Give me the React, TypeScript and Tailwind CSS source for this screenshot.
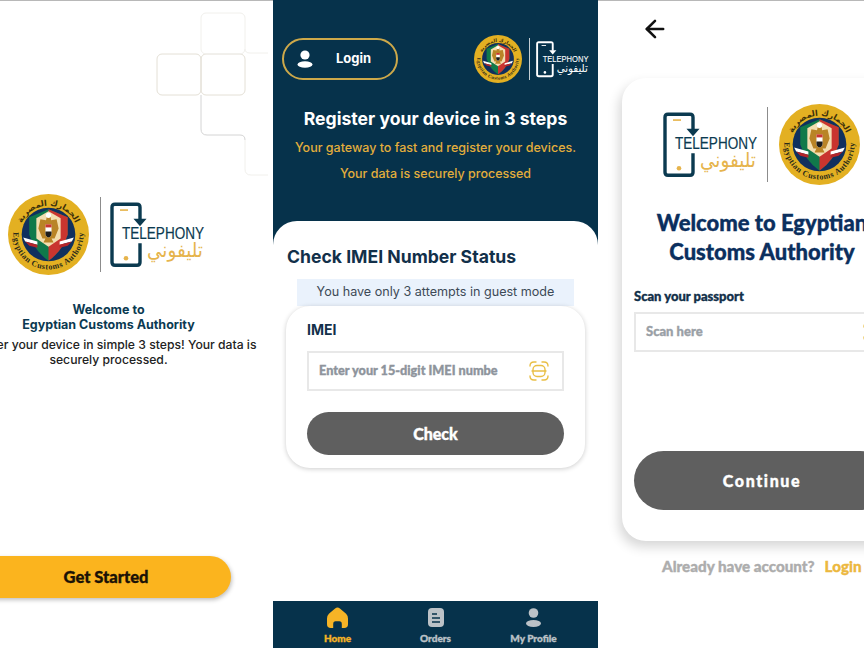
import React from "react";
import { ArrowLeft } from "lucide-react";

const sans = "[font-family:Inter,sans-serif]";
const round = "[font-family:Lato,sans-serif] [-webkit-text-stroke:0.35px_currentColor]";

function Seal({ size, id }: { size: number; id: string }) {
  return (
    <svg width={size} height={size} viewBox="0 0 80 80" className="shrink-0">
      <defs>
        <path id={`${id}-b`} d="M5.5 36 A34.7 34.7 0 1 0 74.5 36" fill="none" />
        <path id={`${id}-t`} d="M13 30 A29 29 0 0 1 67 30" fill="none" />
      </defs>
      <circle cx="40" cy="40" r="40" fill="#e3b022" />
      <circle cx="40" cy="40" r="26.5" fill="#10305e" />
      <path d="M21 23 L40 15 L59 23 L59 40 Q54 56 40 66 Q26 56 21 40 Z" fill="#10794a" />
      <path d="M40 15 L59 23 L59 40 Q54 56 40 66 Z" fill="#c9352f" />
      <path d="M28 24 L40 17 L52 24 L52 44 L40 52 L28 44 Z" fill="#f3deb0" />
      <path d="M39 20 L42 20 L42.5 26 L48 25 L50 34 L46 44 L43 44 L45 48 L35 48 L37 44 L34 44 L30 34 L32 25 L37.5 26 Z" fill="#b98427" />
      <path d="M37 30 L43 30 L43 39 Q43 42 40 43 Q37 42 37 39 Z" fill="#fff" />
      <path d="M37 30 L43 30 L43 33 L37 33 Z" fill="#c9352f" />
      <path d="M37 37 L43 37 L43 39 Q43 42 40 43 Q37 42 37 39 Z" fill="#1c1c1c" />
      <circle cx="40" cy="21" r="2.6" fill="#fff" />
      <path d="M15 43 L29 47 L29 50 L17 47 Z" fill="#fff" />
      <path d="M17 47 L29 50 L29 53 L21 51 Z" fill="#b3262b" />
      <path d="M65 43 L51 47 L51 50 L63 47 Z" fill="#fff" />
      <path d="M63 47 L51 50 L51 53 L59 51 Z" fill="#b3262b" />
      <text fontFamily="Liberation Serif, serif" fontWeight="700" fontSize="8" letterSpacing="0.55" fill="#2b2b1a">
        <textPath href={`#${id}-b`} startOffset="50%" textAnchor="middle">Egyptian Customs Authority</textPath>
      </text>
      <text fontFamily="DejaVu Sans, sans-serif" fontWeight="700" fontSize="8" fill="#3b2f0a">
        <textPath href={`#${id}-t`} startOffset="50%" textAnchor="middle">الجمارك المصرية</textPath>
      </text>
    </svg>
  );
}

function Telephony({ width, mono }: { width: number; mono?: boolean }) {
  const dark = mono ? "#ffffff" : "#0b3a50";
  const gold = mono ? "#ffffff" : "#e6b44c";
  return (
    <svg width={width} height={width * 0.69} viewBox="0 0 95 65" overflow="visible" className="shrink-0">
      <path d="M30 17 L30 5 Q30 2 27 2 L5 2 Q2 2 2 5 L2 60 Q2 63 5 63 L27 63 Q30 63 30 60 L30 41" fill="none" stroke={dark} strokeWidth="3.4" />
      <path d="M23.5 16.5 L36.5 16.5 L30 24 Z" fill={dark} />
      <rect x="10" y="7" width="8" height="1.6" fill={gold} />
      <circle cx="16" cy="56" r="2.3" fill={gold} />
      <text x="12" y="37" fontFamily="Liberation Sans, sans-serif" fontSize="17" stroke={dark} strokeWidth="0.2" fill={dark} textLength="82" lengthAdjust="spacingAndGlyphs">TELEPHONY</text>
      <text x="93" y="55" textAnchor="end" fontFamily="DejaVu Sans, sans-serif" fontSize="20" fill={gold} textLength="56" lengthAdjust="spacingAndGlyphs">تليفوني</text>
    </svg>
  );
}

function ScanIcon({ size = 22 }: { size?: number }) {
  return (
    <svg width={size} height={size} viewBox="0 0 22 22" fill="none" stroke="#e9bf45" strokeWidth="1.4" strokeLinecap="round" className="shrink-0">
      <path d="M2 6 Q2 2 6 2 L8 2 M14 2 L16 2 Q20 2 20 6 M2 16 Q2 20 6 20 L8 20 M14 20 L16 20 Q20 20 20 16" />
      <rect x="5" y="5.5" width="12" height="11" rx="4" />
      <path d="M4 11 L18 11" />
    </svg>
  );
}

function Welcome() {
  return (
    <section className="relative w-[273px] h-[648px] shrink-0 overflow-hidden bg-white border-t border-[#b8b8b8]">
      <svg width="273" height="190" viewBox="0 0 273 190" fill="none" className="absolute left-0 top-0">
        <g stroke="#e4e0d6" strokeWidth="1">
          <rect x="157" y="53" width="44" height="41" rx="5" />
          <rect x="201" y="53" width="44" height="41" rx="5" />
        </g>
        <g stroke="#f1f0ec" strokeWidth="1">
          <rect x="201" y="12" width="44" height="41" rx="5" />
          <path d="M245 48 Q245 52 250 52 L268 52" />
          <path d="M245 139 L245 168 Q245 174 251 174 L268 174" />
        </g>
        <path d="M201 94 L201 128 Q201 134 207 134 L240 134 Q245 134 245 139" stroke="#d4d4d4" />
      </svg>
      <div className={`relative ml-[-54px] w-[325px] flex flex-col items-center ${sans}`}>
        <div className="mt-[193px] flex items-center w-full pl-[62px]">
          <Seal size={81} id="a" />
          <div className="ml-[11px] mr-[9px] w-px h-[75px] bg-[#8c8c8c]" />
          <Telephony width={95} />
        </div>
        <h1 className="mt-[27px] text-[12.5px] leading-[15px] font-bold text-[#0b3a52] text-center">Welcome to<br />Egyptian Customs Authority</h1>
        <p className="mt-[5px] w-[296px] text-[12.2px] leading-[15px] font-medium text-[#222] text-center">Register your device in simple 3 steps! Your data is securely processed.</p>
      </div>
      <div className="absolute left-[-54px] top-[555px] w-[285px] h-[42px] rounded-full bg-[#fbb41e] shadow-[1px_2px_4px_rgba(0,0,0,0.25)] flex items-center justify-center pl-[35px]">
        <span className={`${round} text-[16.5px] font-black text-[#1b1206]`}>Get Started</span>
      </div>
    </section>
  );
}

function NavItem({ icon, label, active }: { icon: React.ReactNode; label: string; active?: boolean }) {
  return (
    <div className="flex flex-col items-center w-[98px]">
      <div className="h-[23px] flex items-center">{icon}</div>
      <span className={`${round} mt-[3px] text-[10px] leading-[12px] font-black ${active ? "text-[#f6b426]" : "text-[#bcc2c7]"}`}>{label}</span>
    </div>
  );
}

function Middle() {
  return (
    <section className={`w-[325px] h-[648px] shrink-0 bg-[#06324b] flex flex-col ${sans}`}>
      <div className="h-[221px] shrink-0 flex flex-col items-center">
        <div className="w-full mt-[35px] pl-[9px] pr-[9px] flex items-center justify-between">
          <div className="w-[116px] h-[42px] rounded-full border-2 border-[#cda94a] flex items-center pl-[13px]">
            <svg width="16" height="18" viewBox="0 0 16 18" fill="#fff">
              <circle cx="8" cy="5" r="4.6" />
              <ellipse cx="8" cy="14.5" rx="7.5" ry="3.3" />
            </svg>
            <span className="ml-[23px] text-[13px] font-bold text-white">Login</span>
          </div>
          <div className="flex items-center">
            <Seal size={48} id="b" />
            <div className="ml-[7px] mr-[6px] w-px h-[42px] bg-[#c5ced3]" />
            <Telephony width={53} mono />
          </div>
        </div>
        <h2 className="mt-[24px] text-[17.6px] leading-[24px] font-bold text-white">Register your device in 3 steps</h2>
        <p className="mt-[8px] text-[12.5px] leading-[18px] font-medium text-[#e3ae3c]">Your gateway to fast and register your devices.</p>
        <p className="mt-[8px] text-[12.5px] leading-[18px] font-medium text-[#e3ae3c]">Your data is securely processed</p>
      </div>
      <div className="flex-1 bg-white rounded-t-[24px] px-[14px] pt-[25px]">
        <h3 className="text-[17.6px] leading-[22px] font-bold text-[#12304a]">Check IMEI Number Status</h3>
        <div className="mx-[10px] mt-[11px] h-[27px] bg-[#eaf2fc] flex items-center justify-center text-[12.6px] text-[#3d4a57]">You have only 3 attempts in guest mode</div>
        <div className="-mx-px px-[21px] pt-[14px] h-[162px] rounded-[24px] bg-white shadow-[0_1px_5px_rgba(0,0,0,0.2)]">
          <div className="text-[14px] leading-[20px] font-bold text-[#12304a]">IMEI</div>
          <div className="mt-[11px] h-[40px] border-2 border-[#e8e8e8] flex items-center justify-between pl-[10px] pr-[12px]">
            <span className={`${round} text-[12.7px] font-black text-[#8e949c]`}>Enter your 15-digit IMEI numbe</span>
            <ScanIcon />
          </div>
          <div className="mt-[21px] h-[43px] rounded-full bg-[#5f5f5f] flex items-center justify-center">
            <span className={`${round} text-[16px] font-black text-white`}>Check</span>
          </div>
        </div>
      </div>
      <nav className="h-[47px] shrink-0 bg-[#06324b] flex items-start justify-center pt-[5px]">
        <NavItem active label="Home" icon={
          <svg width="21" height="21" viewBox="0 0 22 22"><path fillRule="evenodd" d="M8.5 1.5 Q11 -0.5 13.5 1.5 L20 7 Q22 9 22 12 L22 18 Q22 22 18 22 L15.5 22 L15.5 18 Q15.5 15 13 15 L9 15 Q6.5 15 6.5 18 L6.5 22 L4 22 Q0 22 0 18 L0 12 Q0 9 2 7 Z" fill="#f6b426" /></svg>
        } />
        <NavItem label="Orders" icon={
          <svg width="16" height="19" viewBox="0 0 16 19"><rect width="16" height="19" rx="4" fill="#bcc2c7" /><path d="M4 6h5M4 10h8M4 14h8" stroke="#06324b" strokeWidth="1.6" /></svg>
        } />
        <NavItem label="My Profile" icon={
          <svg width="15" height="19" viewBox="0 0 15 19" fill="#bcc2c7"><circle cx="7.5" cy="5" r="4.8" /><ellipse cx="7.5" cy="15.5" rx="7.5" ry="3.4" /></svg>
        } />
      </nav>
    </section>
  );
}

function Passport() {
  return (
    <section className="relative flex-1 h-[648px] overflow-hidden bg-white border-t border-[#b8b8b8] pl-[24px]">
      <ArrowLeft size={28} strokeWidth={2.2} color="#111" className="ml-[19px] mt-[14px]" />
      <div className="mt-[35px] w-[280px] h-[463px] rounded-[24px] bg-white shadow-[-3px_6px_12px_rgba(0,0,0,0.16)] px-[12px]">
        <div className="pt-[26px] pl-[29px] flex items-center">
          <Telephony width={95} />
          <div className="ml-[9px] mr-[11px] w-px h-[75px] bg-[#8c8c8c]" />
          <Seal size={81} id="c" />
        </div>
        <h2 className={`${round} mt-[23px] text-[22px] leading-[29px] font-black text-[#0b2f5e] text-center whitespace-nowrap`}>Welcome to Egyptian<br />Customs Authority</h2>
        <div className={`${round} mt-[21px] text-[13px] leading-[18px] font-black text-[#12304a]`}>Scan your passport</div>
        <div className="mt-[7px] h-[40px] border-2 border-[#e8e8e8] flex items-center justify-between pl-[10px] pr-[4px]">
          <span className={`${round} text-[13px] font-black text-[#9aa0a6]`}>Scan here</span>
          <ScanIcon />
        </div>
        <div className="mt-[99px] h-[59px] rounded-full bg-[#5f5f5f] flex items-center justify-center">
          <span className={`${round} text-[16px] tracking-[1.6px] font-black text-white`}>Continue</span>
        </div>
      </div>
      <div className={`${round} mt-[15px] pl-[40px] text-[15.2px] leading-[20px] font-black whitespace-nowrap`}>
        <span className="text-[#adadad]">Already have account?</span>
        <span className="ml-[10px] text-[#ecb83f]">Login</span>
      </div>
    </section>
  );
}

export default function App() {
  return (
    <div className="flex w-[864px] h-[648px] overflow-hidden bg-white">
      <Welcome />
      <Middle />
      <Passport />
    </div>
  );
}
